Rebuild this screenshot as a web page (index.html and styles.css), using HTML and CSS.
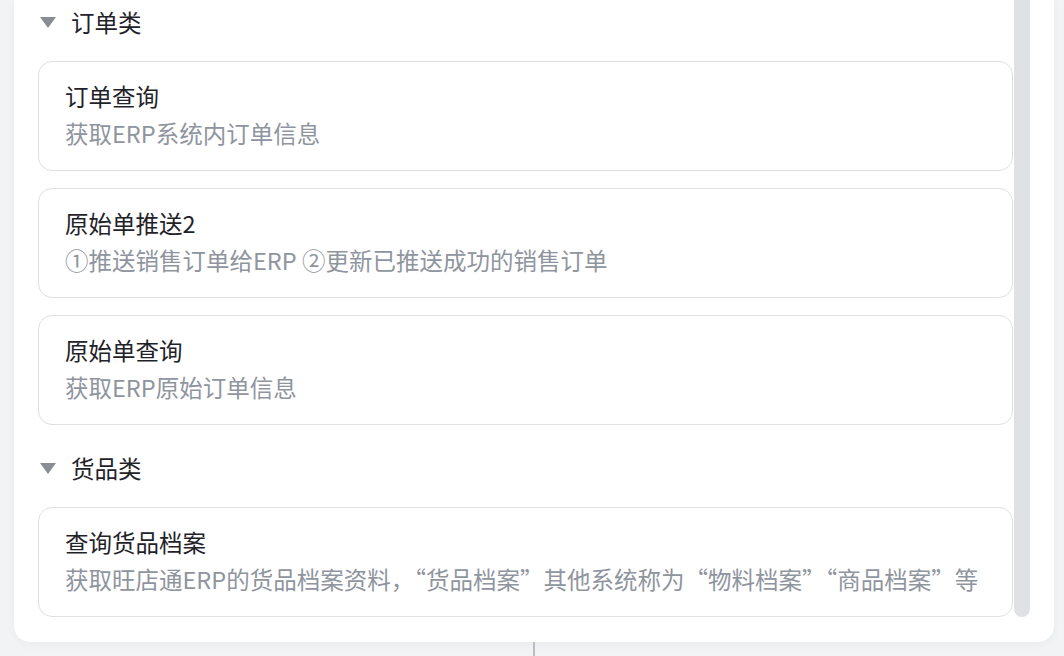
FILE: index.html
```html
<!DOCTYPE html>
<html lang="zh-CN">
<head>
  <meta charset="UTF-8" />
  <title>接口列表</title>
  <link rel="stylesheet" href="styles.css">
</head>
<body>

  <div class="panel">
    <div class="api-list">

      <div class="group-title">
        <span class="caret"></span>
        <span>订单类</span>
      </div>

      <div class="api-card">
        <div class="api-name">订单查询</div>
        <div class="api-desc">获取ERP系统内订单信息</div>
      </div>

      <div class="api-card">
        <div class="api-name">原始单推送2</div>
        <div class="api-desc">①推送销售订单给ERP ②更新已推送成功的销售订单</div>
      </div>

      <div class="api-card">
        <div class="api-name">原始单查询</div>
        <div class="api-desc">获取ERP原始订单信息</div>
      </div>

      <div class="group-title next">
        <span class="caret"></span>
        <span>货品类</span>
      </div>

      <div class="api-card">
        <div class="api-name">查询货品档案</div>
        <div class="api-desc">获取旺店通ERP的货品档案资料，“货品档案”其他系统称为“物料档案”“商品档案”等</div>
      </div>

    </div>

    <div class="scroll-thumb"></div>
  </div>

  <div class="divider"></div>

</body>
</html>
```

FILE: styles.css
```css
* {
  box-sizing: border-box;
}

body {
  margin: 0;
  height: 656px;
  overflow: hidden;
  background: #f2f3f5;
  font-family: "Noto Sans CJK SC", Inter, sans-serif;
}

.panel {
  margin-left: 14px;
  width: 1040px;
  height: 642px;
  padding: 0 24px 25px 24px;
  background: #ffffff;
  border-radius: 0 0 16px 16px;
  box-shadow: 0 2px 10px rgba(0, 0, 0, 0.04);
  display: flex;
  gap: 1px;
}

.api-list {
  flex: 1;
  overflow: hidden;
}

.scroll-thumb {
  width: 16px;
  background: #e0e1e5;
  border-radius: 0 0 8px 8px;
}

/* grupos */
.group-title {
  height: 44px;
  display: flex;
  align-items: center;
  gap: 15px;
  margin-bottom: 17px;
  font-size: 23.5px;
  color: #1f2329;
}

.group-title.next {
  margin-top: 21px;
}

.caret {
  margin-left: 2px;
  width: 0;
  height: 0;
  border-left: 8px solid transparent;
  border-right: 8px solid transparent;
  border-top: 11px solid #8a8d94;
}

/* tarjetas */
.api-card {
  height: 110px;
  padding: 16px 26px 18px;
  border: 1px solid #dedfe1;
  border-radius: 14px;
  margin-bottom: 17px;
  line-height: 37px;
}

.api-card:last-child {
  margin-bottom: 0;
}

.api-name {
  font-size: 23.5px;
  color: #1f2329;
}

.api-desc {
  font-size: 23.5px;
  color: #8f959e;
  white-space: nowrap;
}

.divider {
  margin-left: 533px;
  width: 2px;
  height: 14px;
  background: #bbbcc4;
}
```
